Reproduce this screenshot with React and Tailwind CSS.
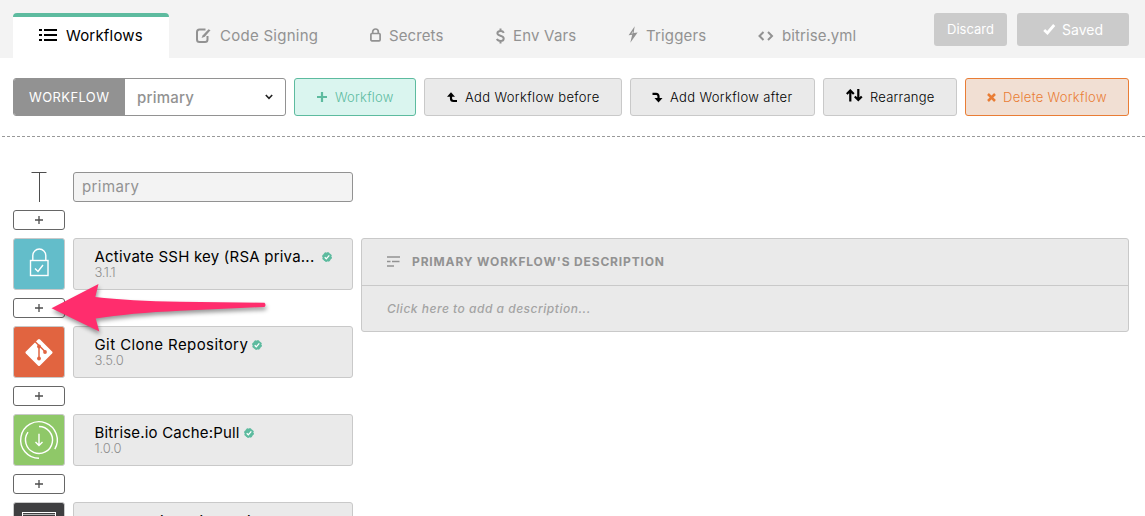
const svgProps = { fill: "none", stroke: "currentColor", xmlns: "http://www.w3.org/2000/svg" };

const ListIcon = () => (
  <svg {...svgProps} width="18" height="12" viewBox="0 0 18 12" strokeWidth="2">
    <path d="M0 1h3M5 1h13M0 6h3M5 6h13M0 11h3M5 11h13" />
  </svg>
);
const EditIcon = () => (
  <svg {...svgProps} width="15" height="16" viewBox="0 0 15 16" strokeWidth="2">
    <path d="M9.5 1.500H3.500Q1 1.500 1 4v7.500Q1 14 3.500 14h5.500Q11.500 14 11.500 11.500V8" />
    <path d="M5.500 10L6.800 7.300L12.500 1.300L14.500 2.200L8.800 8.700Z" fill="currentColor" stroke="none" />
  </svg>
);
const LockIcon = () => (
  <svg {...svgProps} width="11" height="14" viewBox="0 0 11 14" strokeWidth="1.700">
    <rect x="0.9" y="5.500" width="9.200" height="7.300" rx="1" />
    <path d="M2.700 5.500V3.800a2.800 2.800 0 0 1 5.600 0v1.700" />
  </svg>
);
const DollarIcon = () => (
  <svg {...svgProps} width="9" height="16" viewBox="0 0 9 16" strokeWidth="2">
    <path d="M7.800 4.800C7.200 3.500 5.800 3 4.500 3C2.700 3 1.400 3.900 1.400 5.300C1.400 8.500 7.700 6.800 7.700 10.400C7.700 12 6.300 12.900 4.500 12.900C2.800 12.900 1.500 12.300 0.900 10.800M4.500 0.500V3M4.500 13v2.500" />
  </svg>
);
const BoltIcon = () => (
  <svg width="10" height="17" viewBox="0 0 10 17" fill="currentColor">
    <path d="M6.700 0.200L0.600 9.300L4.200 8.800L2.300 16.800L9.600 6.400L5.600 7Z" />
    <path d="M5 5L3.200 7.800L5 7.500Z" fill="#f3f3f3" fillOpacity="0.600" />
  </svg>
);
const CodeIcon = () => (
  <svg {...svgProps} width="16" height="10" viewBox="0 0 16 10" strokeWidth="2">
    <path d="M5.500 1L1.500 5l4 4M10 1l4 4l-4 4" />
  </svg>
);
const CheckIcon = () => (
  <svg {...svgProps} width="13" height="11" viewBox="0 0 13 11" strokeWidth="2.800">
    <path d="M1.200 6L4.400 9L11.200 1" />
  </svg>
);
const PlusIcon = () => (
  <svg {...svgProps} width="10" height="10" viewBox="0 0 10 10" strokeWidth="2.200">
    <path d="M5 0v10M0 5h10" />
  </svg>
);
const BeforeIcon = () => (
  <svg {...svgProps} width="11" height="11" viewBox="0 0 11 11" strokeWidth="2.200">
    <path d="M4 2.500V6.500Q4 9 6.500 9H10" />
    <path d="M0 4.800L4 0.200L8 4.800Z" fill="currentColor" stroke="none" />
  </svg>
);
const AfterIcon = () => (
  <svg {...svgProps} width="11" height="11" viewBox="0 0 11 11" strokeWidth="2.200">
    <path d="M0.500 1.800H4Q6.500 1.800 6.500 4.300V7" />
    <path d="M2.500 6L6.500 10.600L10.500 6Z" fill="currentColor" stroke="none" />
  </svg>
);
const SwapIcon = () => (
  <svg {...svgProps} width="17" height="13" viewBox="0 0 17 13" strokeWidth="2.200">
    <path d="M4.300 2V12.500M0.800 5L4.300 1.500L7.800 5M12.300 0V11M8.800 7.500L12.300 11L15.800 7.500" />
  </svg>
);
const CrossIcon = () => (
  <svg {...svgProps} width="9" height="9" viewBox="0 0 9 9" strokeWidth="2.500">
    <path d="M1 1l7 7M8 1l-7 7" />
  </svg>
);
const TextIcon = () => (
  <svg {...svgProps} width="13" height="11" viewBox="0 0 13 11" strokeWidth="1.400">
    <path d="M0 1h13M0 5.500h3.500M5 5.500h7.500M0 10h7" />
  </svg>
);
const Badge = () => (
  <svg width="10" height="10" viewBox="0 0 10 10" fill="none" className="shrink-0">
    <circle cx="5" cy="5" r="4.500" fill="#5dbb9f" stroke="#5dbb9f" strokeWidth="0.900" strokeDasharray="2 1.500" />
    <path d="M2.700 5.200l1.600 1.600L7.300 3.300" stroke="#fff" strokeWidth="1.300" />
  </svg>
);

const SshArt = () => (
  <svg {...svgProps} width="50" height="50" viewBox="0 0 50 50" stroke="#fff" strokeWidth="1.400">
    <rect x="16.500" y="21.500" width="17.500" height="15" />
    <path d="M18.800 21.500V16.500a6.500 6.500 0 0 1 13 0v5M21 29.500l3 3L29 26" />
  </svg>
);
const GitArt = () => (
  <svg width="50" height="50" viewBox="0 0 50 50">
    <rect x="15" y="15.500" width="20" height="20" rx="1.500" fill="#fff" transform="rotate(45 25 25.500)" />
    <path d="M21 14.500L25 18.500V31M25.500 19L31.500 25" stroke="#e16440" strokeWidth="1.500" fill="none" />
    <circle cx="25" cy="19.500" r="1.900" fill="#e16440" />
    <circle cx="31" cy="25" r="1.900" fill="#e16440" />
    <circle cx="25" cy="31.500" r="1.900" fill="#e16440" />
  </svg>
);
const CacheArt = () => (
  <svg {...svgProps} width="50" height="50" viewBox="0 0 50 50" stroke="#fff" strokeWidth="1.400">
    <path d="M25 43.300A18.300 18.300 0 1 1 40.800 34.200" />
    <path d="M25 11.500A13.500 13.500 0 1 1 14 17.200" />
    <path d="M25 18.800V30.500M21.500 27L25 30.500L28.500 27" />
  </svg>
);
const ScriptArt = () => (
  <svg {...svgProps} width="50" height="50" viewBox="0 0 50 50" stroke="#fff" strokeWidth="1">
    <rect x="8.500" y="9.500" width="33" height="32" />
    <path d="M9 11.500h32M9 13.500h32" stroke="#b5b5b5" />
  </svg>
);

const tabs = [
  { label: "Code Signing", Icon: EditIcon, tab: "w-[175px] pl-[27px]", slot: "w-[24px]", text: "tracking-[0.26px]" },
  { label: "Secrets", Icon: LockIcon, tab: "w-[126px] pl-[26px]", slot: "w-[19px] -translate-y-px", text: "tracking-[0.1px]" },
  { label: "Env Vars", Icon: DollarIcon, tab: "w-[133px] pl-[26px]", slot: "w-[17px]", text: "tracking-[0.2px]" },
  { label: "Triggers", Icon: BoltIcon, tab: "w-[130px] pl-[25px]", slot: "w-[18px] -translate-y-px", text: "tracking-[0.15px]" },
  { label: "bitrise.yml", Icon: CodeIcon, tab: "w-[150px] pl-[25px]", slot: "w-[24px]", text: "tracking-[0.08px]" },
];

const neutral = "border-[#c9c9c9] bg-[#eaeaea] text-black";
const actions = [
  { label: "Workflow", Icon: PlusIcon, box: "w-[122px] pl-[22px] border-[#5dbb9f] bg-[#daf5ef] text-[#5dbb9f]", slot: "w-[18px]", text: "tracking-[0.22px]" },
  { label: "Add Workflow before", Icon: BeforeIcon, box: `w-[198px] pl-[22px] ${neutral}`, slot: "w-[18px]", text: "tracking-[0.36px]" },
  { label: "Add Workflow after", Icon: AfterIcon, box: `w-[185px] pl-[21px] ${neutral}`, slot: "w-[18px]", text: "tracking-[0.37px]" },
  { label: "Rearrange", Icon: SwapIcon, box: `w-[134px] pl-[22px] ${neutral}`, slot: "w-[24px] -translate-y-0.5", text: "tracking-[0.22px]" },
  { label: "Delete Workflow", Icon: CrossIcon, box: "w-[164px] pl-[21px] border-[#e97d35] bg-[#f1dfd3] text-[#e97d35]", slot: "w-[16px]", text: "tracking-[0.3px]" },
];

const steps = [
  { name: "Activate SSH key (RSA priva...", version: "3.1.1", Art: SshArt, color: "bg-[#63bdca]", text: "tracking-[0.22px]", gap: "gap-[8px]", vtext: "tracking-[-0.45px]" },
  { name: "Git Clone Repository", version: "3.5.0", Art: GitArt, color: "bg-[#e16440]", text: "tracking-[0.42px]", gap: "gap-[4px]", vtext: "tracking-[-0.15px]" },
  { name: "Bitrise.io Cache:Pull", version: "1.0.0", Art: CacheArt, color: "bg-[#8fc868]", text: "tracking-[0.18px]", gap: "gap-[4px]", vtext: "tracking-[-0.1px]" },
  { name: "Do anything with Script step", Art: ScriptArt, color: "bg-[#3f3f41]", text: "tracking-[0.25px]", gap: "gap-[5px]" },
];

const AddStep = () => (
  <button className="flex h-5 w-[52px] shrink-0 items-center justify-center rounded-[3px] border border-[#666] bg-white text-[#4d4d4d]">
    <svg {...svgProps} width="8" height="8" viewBox="0 0 8 8" strokeWidth="1.300">
      <path d="M4 0v8M0 4h8" />
    </svg>
  </button>
);

const Step = ({ name, version, Art, color, text, gap, vtext }) => (
  <div className="flex h-[52px] shrink-0 gap-2">
    <div className={`w-[52px] overflow-hidden rounded-[3px] border border-[#c9c9c9] ${color}`}>
      <Art />
    </div>
    <div className={`w-[280px] rounded-[3px] border border-[#c9c9c9] bg-[#eaeaea] pl-[20.5px] ${version ? "pt-[9px]" : "pt-[10px]"}`}>
      <div className={`flex items-center text-[15px] leading-[18px] whitespace-nowrap text-black ${gap}`}>
        <span className={text}>{name}</span>
        <Badge />
      </div>
      {version && <div className={`-mt-px text-[13px] leading-[14px] font-light text-[#8f8f8f] ${vtext}`}>{version}</div>}
    </div>
  </div>
);

export default function App() {
  return (
    <div className="relative h-[516px] w-[1145px] overflow-hidden bg-white font-['Inter',sans-serif]">
      <header className="flex h-[58px] justify-between bg-[#f3f3f3] pt-[13px] pr-4 pl-[13px]">
        <nav className="flex">
          <a className="flex w-[156px] items-center rounded-t-[4px] border-t-4 border-[#5dbb9f] bg-white pb-[3px] pl-[26px] text-black">
            <span className="flex w-[27px] -translate-y-px"><ListIcon /></span>
            <span className="text-[15px] tracking-[0.18px]">Workflows</span>
          </a>
          {tabs.map(({ label, Icon, tab, slot, text }) => (
            <a key={label} className={`flex items-center whitespace-nowrap text-[#929292] ${tab}`}>
              <span className={`flex shrink-0 ${slot}`}><Icon /></span>
              <span className={`pt-0.5 text-[15px] ${text}`}>{label}</span>
            </a>
          ))}
        </nav>
        <div className="flex gap-[10px] text-white">
          <button className="h-[33px] w-[73px] rounded-[3px] bg-[#cbcbcb] text-[13px]">Discard</button>
          <button className="flex h-[33px] w-[112px] items-center justify-center gap-[6px] rounded-[3px] bg-[#cbcbcb] text-sm">
            <CheckIcon />
            Saved
          </button>
        </div>
      </header>

      <div className="flex h-[78px] gap-2 pt-5 pl-[13px]">
        <div className="flex h-[38px] w-[273px] overflow-hidden rounded-[3px] border border-[#929292]">
          <div className="flex w-[111px] items-center bg-[#929292] pt-0.5 pl-[15px] text-[13px] tracking-[0.39px] text-white">WORKFLOW</div>
          <div className="flex flex-1 items-center justify-between pr-3 pl-[12px] text-[15px] tracking-[0.24px] text-[#929292]">
            <span className="pt-0.5 font-medium">primary</span>
            <svg {...svgProps} width="8" height="6" viewBox="0 0 8 6" strokeWidth="1.600" className="text-[#222]">
              <path d="M0.800 1L4 4.300L7.200 1" />
            </svg>
          </div>
        </div>
        {actions.map(({ label, Icon, box, slot, text }) => (
          <button key={label} className={`flex h-[38px] items-center rounded-[3px] border whitespace-nowrap ${box}`}>
            <span className={`flex shrink-0 ${slot}`}><Icon /></span>
            <span className={`pt-0.5 text-[13px] font-light ${text}`}>{label}</span>
          </button>
        ))}
      </div>
      <div className="ml-0.5 h-px bg-[repeating-linear-gradient(to_right,#999_0_3px,transparent_3px_5px)]" />

      <main className="flex gap-2 pt-[35px] pl-[13px]">
        <div className="flex w-[340px] flex-col gap-2">
          <div className="flex h-[30px] gap-2">
            <div className="flex w-[52px] justify-center">
              <svg {...svgProps} width="16" height="30" viewBox="0 0 16 30" strokeWidth="1" className="text-[#4d4d4d]">
                <path d="M0.500 0.500h15M8.500 0.500v29.500" />
              </svg>
            </div>
            <div className="flex w-[280px] items-center rounded-[3px] border border-[#929292] bg-[#f3f3f3] pl-2 text-[15px] tracking-[0.4px] text-[#929292]">
              primary
            </div>
          </div>
          {steps.map((step) => (
            <div key={step.name} className="flex flex-col gap-2">
              <AddStep />
              <Step {...step} />
            </div>
          ))}
        </div>

        <section className="mt-[66px] h-[94px] w-[768px] rounded-[3px] border border-[#c9c9c9] bg-[#eaeaea]">
          <div className="flex h-[47px] items-center border-b border-[#c9c9c9] pl-[25px] text-[#929292]">
            <span className="flex w-[25px] -translate-y-px"><TextIcon /></span>
            <h2 className="text-[12px] font-bold tracking-[0.85px] whitespace-nowrap">PRIMARY WORKFLOW'S DESCRIPTION</h2>
          </div>
          <p className="pt-[14px] pl-[25px] text-[12px] leading-[18px] font-medium tracking-[0.51px] text-[#a3a3a3] italic">
            Click here to add a description...
          </p>
        </section>
      </main>

      <svg className="absolute top-[276px] left-[44px] drop-shadow-[1px_3px_2px_rgba(0,0,0,0.4)]" width="232" height="64" viewBox="44 276 232 64">
        <path d="M51.500 308.300L98.500 284L95.300 297Q130 301 180 301.800L264.500 302.800Q266.500 305 264.500 307L180 310.700Q130 313 95.700 318.500L99.300 331.500Z" fill="#ff2d6d" />
      </svg>
    </div>
  );
}
